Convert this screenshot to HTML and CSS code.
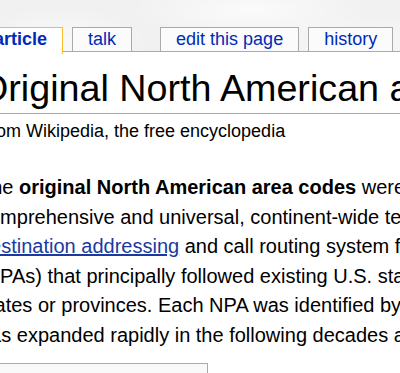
FILE: index.html
```html
<!DOCTYPE html>
<html lang="en">
  <head>
    <meta charset="UTF-8" />
    <title>Original North American area codes - Wikipedia</title>
    <link rel="stylesheet" href="styles.css">
  </head>
  <body>
    <div class="head">
      <ul class="tabs">
        <li class="tab selected"><a href="#">article</a></li>
        <li class="tab"><a href="#">talk</a></li>
        <li class="tab edit"><a href="#">edit this page</a></li>
        <li class="tab"><a href="#">history</a></li>
      </ul>
    </div>
    <div class="content">
      <h1 class="firstHeading">Original North American area codes</h1>
      <div class="siteSub">From Wikipedia, the free encyclopedia</div>
      <p class="intro">
        The <b>original North American area codes</b> were established in 1947<br />
        comprehensive and universal, continent-wide telephone numbering plan<br />
        <a href="#">destination addressing</a> and call routing system for<br />
        (NPAs) that principally followed existing U.S. state and Canadian<br />
        states or provinces. Each NPA was identified by a three-digit<br />
        has expanded rapidly in the following decades and
      </p>
      <div class="toc"></div>
    </div>
  </body>
</html>
```

FILE: styles.css
```css
body {
  margin: 0;
  font-family: "Liberation Sans", Arial, sans-serif;
  color: #000;
  background: #fff;
  overflow: hidden;
  width: 400px;
  height: 373px;
}
.head {
  height: 51px;
  background-color: #f1f1f1;
  background-image:
    radial-gradient(ellipse 120px 30px at 250px 10px, rgba(255, 255, 255, 0.7), transparent),
    radial-gradient(ellipse 90px 40px at 60px 45px, rgba(255, 255, 255, 0.6), transparent),
    radial-gradient(ellipse 100px 25px at 360px 40px, rgba(255, 255, 255, 0.5), transparent);
  display: flex;
  align-items: flex-end;
}
.tabs {
  list-style: none;
  margin: 0 0 0 -22px;
  padding: 0;
  display: flex;
  align-items: flex-end;
  gap: 9px;
}
.tab {
  background: #fbfbfb;
  border: 1px solid #aaa;
  border-bottom: none;
  height: 23px;
  padding: 0 15px;
  font-size: 18px;
  line-height: 22px;
}
.tab a {
  color: #002bb8;
  text-decoration: none;
}
.tab.edit {
  margin-left: 19px;
}
.tab.selected {
  background: #fff;
  border-color: #fabd23;
  height: 26px;
  margin-bottom: -3px;
  font-weight: bold;
  position: relative;
  z-index: 1;
}
.content {
  border-top: 1px solid #aaa;
  margin-left: -21px;
  background: #fff;
}
.firstHeading {
  margin: 14px 0 0 0;
  padding: 0 0 2px 0;
  font-size: 37.7px;
  font-weight: normal;
  line-height: 45px;
  border-bottom: 1px solid #aaa;
  white-space: nowrap;
}
.siteSub {
  margin-top: 7px;
  font-size: 18px;
  line-height: 21px;
  white-space: nowrap;
}
.intro {
  margin: 31px 0 0 0;
  font-size: 20px;
  line-height: 29.6px;
  white-space: nowrap;
}
.intro a {
  color: #1a3a9e;
  text-decoration: underline;
}
.toc {
  margin-top: 12px;
  width: 227px;
  height: 40px;
  border: 1px solid #aaa;
  background: #f9f9f9;
}
```
